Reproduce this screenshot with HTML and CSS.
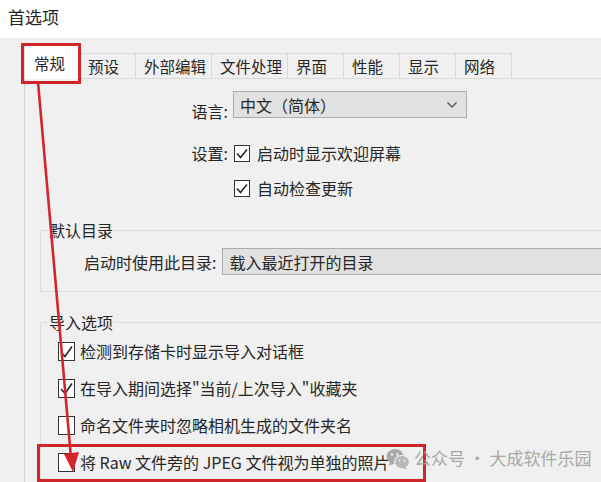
FILE: index.html
```html
<!DOCTYPE html>
<html lang="zh-CN">
<head>
    <meta charset="UTF-8">
    <meta name="viewport" content="width=device-width, initial-scale=1.0">
    <title>首选项</title>
    <link rel="stylesheet" href="styles.css">
</head>
<body>
    <div class="window">
        <div class="titlebar">首选项</div>

        <div class="tabs">
            <div class="tab active">常规</div>
            <div class="tab">预设</div>
            <div class="tab wide">外部编辑</div>
            <div class="tab wide">文件处理</div>
            <div class="tab">界面</div>
            <div class="tab">性能</div>
            <div class="tab">显示</div>
            <div class="tab">网络</div>
        </div>

        <div class="panel">
            <div class="form-grid">
                <span class="label">语言:</span>
                <div class="select lang">
                    <span>中文（简体）</span>
                    <svg class="chevron" width="12" height="8" viewBox="0 0 12 8"><path d="M1.5 1.5 L6 6 L10.5 1.5" fill="none" stroke="#555" stroke-width="1.4"/></svg>
                </div>

                <span class="label">设置:</span>
                <label class="check">
                    <span class="box small"><svg width="16" height="17" viewBox="0 0 16 17"><path d="M3 8.5 L6.5 12.5 L13 4.5" fill="none" stroke="#222" stroke-width="1.5"/></svg></span>
                    启动时显示欢迎屏幕
                </label>

                <span></span>
                <label class="check">
                    <span class="box small"><svg width="16" height="17" viewBox="0 0 16 17"><path d="M3 8.5 L6.5 12.5 L13 4.5" fill="none" stroke="#222" stroke-width="1.5"/></svg></span>
                    自动检查更新
                </label>
            </div>

            <fieldset class="group">
                <legend>默认目录</legend>
                <div class="dir-row">
                    <span>启动时使用此目录:</span>
                    <div class="select dir">载入最近打开的目录</div>
                </div>
            </fieldset>

            <fieldset class="group import">
                <legend>导入选项</legend>
                <label class="check row">
                    <span class="box"><svg width="17" height="19" viewBox="0 0 17 19"><path d="M3 10 L7 14.5 L14 4.5" fill="none" stroke="#222" stroke-width="1.5"/></svg></span>
                    检测到存储卡时显示导入对话框
                </label>
                <label class="check row">
                    <span class="box"><svg width="17" height="19" viewBox="0 0 17 19"><path d="M3 10 L7 14.5 L14 4.5" fill="none" stroke="#222" stroke-width="1.5"/></svg></span>
                    在导入期间选择"当前/上次导入"收藏夹
                </label>
                <label class="check row">
                    <span class="box"></span>
                    命名文件夹时忽略相机生成的文件夹名
                </label>
                <label class="check row">
                    <span class="box"></span>
                    将 Raw 文件旁的 JPEG 文件视为单独的照片
                </label>
            </fieldset>
        </div>

        <!-- annotations drawn over the dialog -->
        <div class="mark mark-tab"></div>
        <div class="mark mark-row"></div>
        <svg class="arrow" width="601" height="482" viewBox="0 0 601 482">
            <line x1="38" y1="82" x2="71" y2="458" stroke="#d3262c" stroke-width="2.6"/>
            <path d="M64 454 L79 452 L73 472 Z" fill="#d3262c"/>
        </svg>

        <div class="watermark">
            <svg width="24" height="22" viewBox="0 0 24 22">
                <ellipse cx="9" cy="8.5" rx="8.5" ry="7.5" fill="#a9a9a9"/>
                <path d="M4 14 L3 18 L8 15.5 Z" fill="#a9a9a9"/>
                <ellipse cx="16" cy="14" rx="7.5" ry="6.5" fill="#b8b8b8" stroke="#f0f0f0" stroke-width="1.2"/>
                <path d="M19.5 19 L21 21.5 L16 20 Z" fill="#b8b8b8"/>
                <circle cx="6" cy="6.5" r="1.2" fill="#f0f0f0"/>
                <circle cx="11.5" cy="6.5" r="1.2" fill="#f0f0f0"/>
                <circle cx="13.5" cy="12.5" r="1" fill="#f0f0f0"/>
                <circle cx="18.5" cy="12.5" r="1" fill="#f0f0f0"/>
            </svg>
            <span>公众号 · 大成软件乐园</span>
        </div>
    </div>
</body>
</html>
```

FILE: styles.css
```css
* {
    box-sizing: border-box;
}
html, body {
    margin: 0;
    padding: 0;
}
body {
    font-family: "Noto Sans CJK SC", "Noto Sans", sans-serif;
    font-size: 16px;
    color: #262626;
    background: #f0f0f0;
}
.window {
    position: relative;
    width: 601px;
    height: 482px;
    overflow: hidden;
    background: #f0f0f0;
}
.titlebar {
    height: 38px;
    background: #fff;
    padding-left: 8px;
    font-size: 17px;
    line-height: 34px;
}

/* tab strip */
.tabs {
    display: flex;
    align-items: flex-end;
    height: 40px;
    padding-left: 24px;
}
.tab {
    width: 56px;
    height: 25px;
    padding-left: 8px;
    font-size: 15.5px;
    line-height: 24px;
    border: 1px solid #dadada;
    border-bottom: none;
    border-left: none;
    background: #f0f0f0;
}
.tab.wide {
    width: 76px;
}
.tab.active {
    position: relative;
    z-index: 1;
    height: 34px;
    margin-bottom: -1px;
    padding: 5px 0 0 9px;
    background: #fff;
    border-left: 1px solid #dadada;
}

/* panel body */
.panel {
    margin-left: 24px;
    height: 404px;
    border-top: 1px solid #dadada;
    border-left: 1px solid #d6d6d6;
    background: #f0f0f0;
}
.form-grid {
    display: grid;
    grid-template-columns: 203px 1fr;
    column-gap: 5px;
    row-gap: 11px;
    align-items: center;
    margin-top: 12px;
}
.label {
    text-align: right;
}
.select {
    display: flex;
    align-items: center;
    height: 27px;
    background: #e1e1e1;
    border: 1px solid #adadad;
    padding-left: 6px;
}
.select.lang {
    width: 234px;
    justify-content: space-between;
    padding-right: 8px;
    margin-bottom: 12px;
}
.check {
    display: flex;
    align-items: center;
    gap: 7px;
    height: 24px;
    line-height: 24px;
}
.box {
    display: inline-block;
    flex: none;
    width: 17px;
    height: 19px;
    border: 1px solid #333;
    background: #fff;
}
.box svg {
    display: block;
    margin: -1px 0 0 -1px;
}
.box.small {
    width: 16px;
    height: 17px;
    margin-left: 1px;
}

/* group boxes */
.group {
    margin: 20px 0 0 15px;
    padding: 0 0 16px 7px;
    border: 1px solid #dcdcdc;
    border-right: none;
}
.group legend {
    padding: 0 1px;
    line-height: 20px;
}
.dir-row {
    display: flex;
    align-items: center;
    gap: 6px;
    margin-top: 8px;
    padding-left: 36px;
}
.select.dir {
    flex: 1;
    margin-right: -40px;
}
.group.import {
    border-bottom: none;
}
.check.row {
    gap: 5px;
    margin: 7px 0 13px 10px;
}

/* red annotations */
.mark {
    position: absolute;
    border: 3px solid #cf252b;
}
.mark-tab {
    left: 21px;
    top: 43px;
    width: 60px;
    height: 41px;
    z-index: 2;
}
.mark-row {
    left: 37px;
    top: 444px;
    width: 389px;
    height: 38px;
}
.arrow {
    position: absolute;
    left: 0;
    top: 0;
    z-index: 3;
}
.watermark {
    position: absolute;
    left: 386px;
    top: 445px;
    display: flex;
    align-items: center;
    gap: 4px;
    font-size: 17px;
    color: #a8a8a8;
    z-index: 4;
}
.watermark svg {
    margin-top: 2px;
}
```
